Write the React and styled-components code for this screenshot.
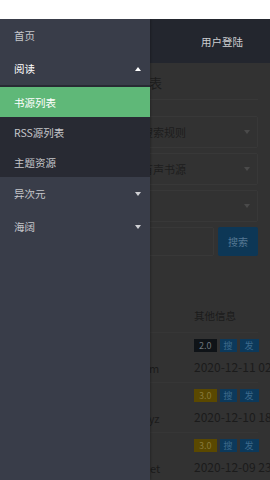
import React from 'react'
import styled, { createGlobalStyle } from 'styled-components'

const GlobalStyle = createGlobalStyle`
  html, body {
    margin: 0;
    padding: 0;
    width: 270px;
    height: 480px;
    overflow: hidden;
    background: #ffffff;
    font-family: "Noto Sans CJK SC", "Noto Sans", sans-serif;
  }
  * { box-sizing: border-box; }
`

const Screen = styled.div`
  width: 270px;
  height: 480px;
  display: flex;
  flex-direction: column;
  overflow: hidden;
`

const StatusStrip = styled.div`
  height: 19px;
  flex: none;
  background: #ffffff;
`

const Viewport = styled.div`
  position: relative;
  flex: 1;
  overflow: hidden;
  display: flex;
  flex-direction: column;
`

const Header = styled.div`
  height: 44px;
  flex: none;
  background: #23262e;
  display: flex;
  align-items: center;
  justify-content: flex-end;
  padding-right: 27px;
  font-size: 10.5px;
  color: #cdced1;
`

const Content = styled.div`
  flex: 1;
  background: #323232;
  padding: 0 12px;
  display: flex;
  flex-direction: column;
`

const TitleBar = styled.div`
  height: 37px;
  padding: 3px 0 0 61px;
  display: flex;
  align-items: center;
  border-bottom: 1px solid #383838;
  font-size: 13px;
  color: #1c1c1c;
  white-space: nowrap;
`

const Form = styled.div`
  margin-top: 16px;
  display: flex;
  flex-direction: column;
  gap: 5px;
`

const SelectBox = styled.div`
  height: 32px;
  border: 1px solid #383838;
  border-radius: 2px;
  display: flex;
  align-items: center;
  justify-content: space-between;
  padding: 0 7px 0 129px;
  font-size: 11px;
  color: #1d1d1d;
`

const Caret = styled.span`
  width: 0;
  height: 0;
  border-left: 3.5px solid transparent;
  border-right: 3.5px solid transparent;
  border-top: 4px solid ${p => p.$color || '#4a4a4a'};
  border-bottom: none;
  ${p => p.$up && `
    border-top: none;
    border-bottom: 4px solid ${p.$color || '#4a4a4a'};
  `}
`

const SearchRow = styled.div`
  display: flex;
  gap: 4px;
  height: 29px;
`

const Input = styled.div`
  flex: 1;
  border: 1px solid #383838;
  border-radius: 2px;
`

const SearchButton = styled.div`
  width: 40px;
  background: #0d3756;
  border-radius: 2px;
  display: flex;
  align-items: center;
  justify-content: center;
  font-size: 10px;
  color: #557893;
`

const Table = styled.div`
  margin-top: 43px;
  display: flex;
  flex-direction: column;
`

const Row = styled.div`
  display: grid;
  grid-template-columns: 178px 1fr;
  height: ${p => (p.$head ? '34px' : '50px')};
  border-bottom: 1px solid #363636;
`

const Cell = styled.div`
  display: flex;
  flex-direction: column;
  justify-content: ${p => (p.$head ? 'center' : 'flex-start')};
  padding: ${p => (p.$head ? '0 4px' : '6px 4px 0')};
  gap: 8px;
  font-size: 10.5px;
  color: #1b1b1b;
  white-space: nowrap;
  min-width: 0;
`

const Line = styled.div`
  height: 14px;
  line-height: 14px;
  font-size: ${p => (p.$small ? '11px' : '12px')};
  color: #1b1b1b;
  white-space: nowrap;
`

const Badges = styled.div`
  display: flex;
  gap: 3px;
  height: 13px;
`

const Badge = styled.span`
  height: 13px;
  padding: 0 ${p => p.$pad || 4}px;
  display: flex;
  align-items: center;
  font-size: 9px;
  background: ${p => p.$bg};
  color: ${p => p.$fg};
`

const Drawer = styled.nav`
  position: absolute;
  top: 0;
  left: 0;
  bottom: 0;
  width: 150px;
  background: #393d49;
  box-shadow: 1px 0 2px rgba(0, 0, 0, 0.25);
  display: flex;
  flex-direction: column;
`

const NavItem = styled.div`
  height: 33px;
  display: flex;
  align-items: center;
  justify-content: space-between;
  padding: 0 9px 0 14px;
  font-size: 10.5px;
  color: ${p => (p.$open ? '#ffffff' : '#c6c7cb')};
`

const SubMenu = styled.div`
  background: #282a33;
  padding-top: 2px;
  display: flex;
  flex-direction: column;
`

const SubItem = styled.div`
  height: 30px;
  display: flex;
  align-items: center;
  padding-left: 14px;
  font-size: 10.5px;
  background: ${p => (p.$active ? '#5fb878' : 'transparent')};
  color: ${p => (p.$active ? '#ffffff' : '#c6c7cb')};
`

const rows = [
  { url: 'https://www.xinbiquge.com', ver: '2.0', verBg: '#0f1317', verFg: '#6d747c', date: '2020-12-11 02:31:47' },
  { url: 'https://www.xinbiquge5.xyz', ver: '3.0', verBg: '#5a4800', verFg: '#86783a', date: '2020-12-10 18:22:05' },
  { url: 'https://www.xinbiquge5.net', ver: '3.0', verBg: '#5a4800', verFg: '#86783a', date: '2020-12-09 23:15:36' },
]

const App = () => (
  <Screen>
    <GlobalStyle />
    <StatusStrip />
    <Viewport>
      <Header>用户登陆</Header>
      <Content>
        <TitleBar>阅读 / 书源列表</TitleBar>
        <Form>
          <SelectBox>搜索规则<Caret /></SelectBox>
          <SelectBox>有声书源<Caret /></SelectBox>
          <SelectBox><span /><Caret /></SelectBox>
          <SearchRow>
            <Input />
            <SearchButton>搜索</SearchButton>
          </SearchRow>
        </Form>
        <Table>
          <Row $head>
            <Cell $head>书源</Cell>
            <Cell $head>其他信息</Cell>
          </Row>
          {rows.map(r => (
            <Row key={r.date}>
              <Cell>
                <Line>书源</Line>
                <Line $small>{r.url}</Line>
              </Cell>
              <Cell>
                <Badges>
                  <Badge $bg={r.verBg} $fg={r.verFg} $pad={5}>{r.ver}</Badge>
                  <Badge $bg="#0c395b" $fg="#3c6a8c">搜</Badge>
                  <Badge $bg="#0c395b" $fg="#3c6a8c" $pad={5}>发</Badge>
                </Badges>
                <Line>{r.date}</Line>
              </Cell>
            </Row>
          ))}
        </Table>
      </Content>

      <Drawer>
        <NavItem>首页</NavItem>
        <NavItem $open>阅读<Caret $up $color="#ffffff" /></NavItem>
        <SubMenu>
          <SubItem $active>书源列表</SubItem>
          <SubItem>RSS源列表</SubItem>
          <SubItem>主题资源</SubItem>
        </SubMenu>
        <NavItem>异次元<Caret $color="#d0d1d4" /></NavItem>
        <NavItem>海阔<Caret $color="#d0d1d4" /></NavItem>
      </Drawer>
    </Viewport>
  </Screen>
)

export default App
